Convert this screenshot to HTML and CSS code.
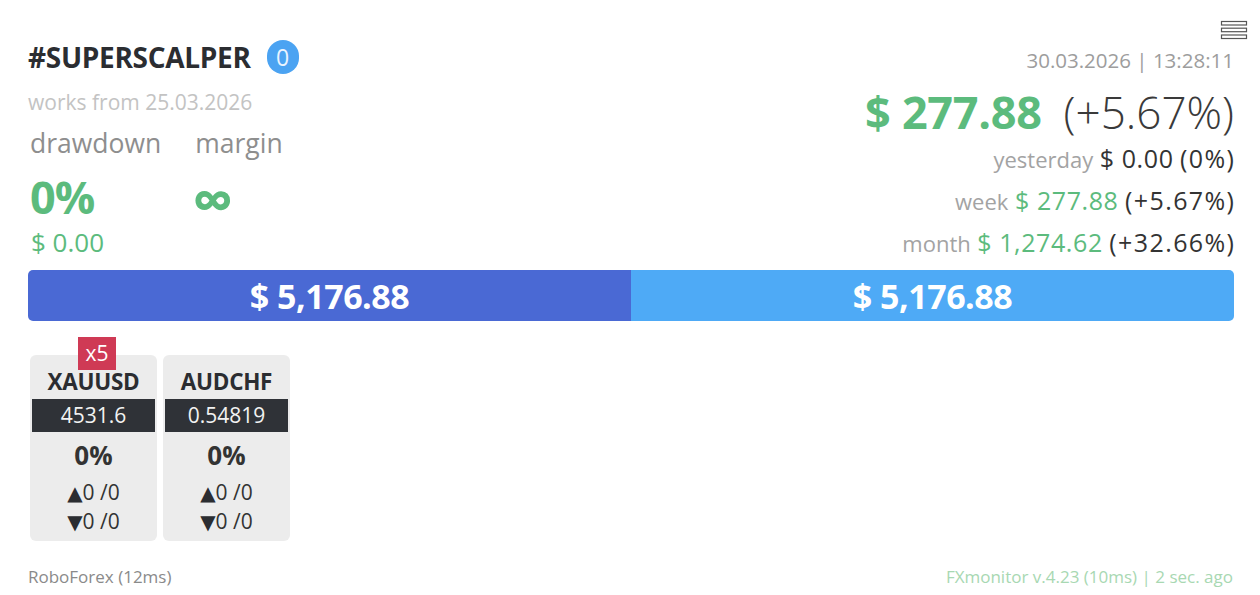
FILE: index.html
```html
<!DOCTYPE html>
<html lang="en">
<head>
<meta charset="utf-8">
<title>#SUPERSCALPER</title>
<link rel="stylesheet" href="styles.css">
</head>
<body>
<div class="page">
  <header class="top">
    <div class="left">
      <div class="title-row">
        <h1 class="title">#SUPERSCALPER</h1>
        <span class="count">0</span>
      </div>
      <div class="since">works from 25.03.2026</div>
      <div class="stats">
        <div class="stat">
          <div class="label">drawdown</div>
          <div class="big">0%</div>
          <div class="sub">$ 0.00</div>
        </div>
        <div class="stat">
          <div class="label">margin</div>
          <div class="big inf">∞</div>
        </div>
      </div>
    </div>
    <div class="right">
      <div class="menu" aria-label="menu">
        <svg width="28" height="20" viewBox="0 0 28 20">
          <rect x="1.5" y="1.5" width="25" height="3.5" fill="none" stroke="#555" stroke-width="1.2"/>
          <rect x="1.5" y="8.2" width="25" height="3.5" fill="none" stroke="#555" stroke-width="1.2"/>
          <rect x="1.5" y="15" width="25" height="3.5" fill="none" stroke="#555" stroke-width="1.2"/>
        </svg>
      </div>
      <div class="date">30.03.2026 | 13:28:11</div>
      <div class="profit"><span class="profit-val">$ 277.88</span><span class="profit-pct">(+5.67%)</span></div>
      <div class="period"><span class="plabel">yesterday</span> <span class="val dark">$ 0.00</span> <span class="val pc dark">(0%)</span></div>
      <div class="period"><span class="plabel">week</span> <span class="val green">$ 277.88</span> <span class="val pc dark">(+5.67%)</span></div>
      <div class="period"><span class="plabel">month</span> <span class="val green">$ 1,274.62</span> <span class="val pc dark">(+32.66%)</span></div>
    </div>
  </header>

  <div class="bar">
    <div class="bar-part balance">$ 5,176.88</div>
    <div class="bar-part equity">$ 5,176.88</div>
  </div>

  <div class="cards">
    <div class="card">
      <span class="mult">x5</span>
      <div class="sym">XAUUSD</div>
      <div class="price">4531.6</div>
      <div class="pct">0%</div>
      <div class="trades"><span class="tri">▲</span>0 /0</div>
      <div class="trades last"><span class="tri">▼</span>0 /0</div>
    </div>
    <div class="card">
      <div class="sym">AUDCHF</div>
      <div class="price">0.54819</div>
      <div class="pct">0%</div>
      <div class="trades"><span class="tri">▲</span>0 /0</div>
      <div class="trades last"><span class="tri">▼</span>0 /0</div>
    </div>
  </div>

  <footer class="foot">
    <span class="broker">RoboForex (12ms)</span>
    <span class="version">FXmonitor v.4.23 (10ms) | 2 sec. ago</span>
  </footer>
</div>
</body>
</html>
```

FILE: styles.css
```css
* { box-sizing: border-box; }

html, body {
  margin: 0;
  padding: 0;
  background: #ffffff;
}

body {
  font-family: "Open Sans", "Noto Sans", "Liberation Sans", sans-serif;
  color: #333;
}

.page {
  height: 595px;
  padding: 20px 26px 0 28px;
  display: flex;
  flex-direction: column;
}

.top {
  display: flex;
  justify-content: space-between;
  align-items: flex-start;
  height: 244px;
}

.left {
  padding-top: 20px;
}

.title-row {
  display: flex;
  align-items: center;
  height: 34px;
}

.title {
  margin: 0;
  font-size: 28px;
  font-weight: 700;
  line-height: 34px;
  color: #2b2d31;
  letter-spacing: -0.3px;
}

.count {
  margin-left: 16px;
  width: 32px;
  height: 34px;
  border-radius: 16px;
  background: #4ba3f2;
  color: #eaf4ff;
  font-size: 23px;
  line-height: 34px;
  text-align: center;
}

.since {
  margin-top: 14px;
  font-size: 21px;
  line-height: 28px;
  color: #c3c3c3;
}

.stats {
  display: flex;
  gap: 34px;
  margin-top: 10px;
  padding-left: 2px;
}

.stat {
  display: flex;
  flex-direction: column;
}

.label {
  font-size: 26.5px;
  line-height: 34px;
  color: #8e8e8e;
}

.big {
  margin-top: 12px;
  height: 50px;
  font-size: 45px;
  font-weight: 700;
  line-height: 50px;
  color: #5cbb7d;
  letter-spacing: -1px;
}

.inf {
  font-size: 58px;
  line-height: 54px;
  margin-left: -3px;
}

.sub {
  margin-top: 5px;
  margin-left: 1px;
  font-size: 26px;
  line-height: 30px;
  color: #5cbb7d;
}

.right {
  display: flex;
  flex-direction: column;
  align-items: flex-end;
}

.menu {
  height: 20px;
  margin-right: -14px;
  line-height: 0;
}

.date {
  margin-top: 6px;
  font-size: 20.5px;
  line-height: 28px;
  color: #9d9d9d;
}

.profit {
  margin-top: 13px;
  height: 50px;
  display: flex;
  align-items: baseline;
  white-space: nowrap;
}

.profit-val {
  font-size: 45px;
  font-weight: 700;
  line-height: 50px;
  color: #5cbb7d;
  letter-spacing: -0.3px;
}

.profit-pct {
  margin-left: 22px;
  font-size: 44px;
  font-weight: 300;
  line-height: 50px;
  color: #3a3a3a;
}

.period {
  height: 42px;
  font-size: 25px;
  line-height: 42px;
  white-space: nowrap;
}

.plabel {
  font-size: 22px;
  color: #a3a3a3;
}

.val {
  letter-spacing: 0.6px;
}

.val.pc {
  letter-spacing: 1.4px;
  margin-right: -1.4px;
}

.dark { color: #333; }
.green { color: #5cbb7d; }

.bar {
  margin-top: 6px;
  height: 51px;
  display: flex;
  border-radius: 5px;
  overflow: hidden;
}

.bar-part {
  flex: 1 1 0;
  display: flex;
  align-items: center;
  justify-content: center;
  color: #ffffff;
  font-size: 34px;
  font-weight: 700;
  letter-spacing: -0.5px;
}

.balance { background: #4a69d4; }
.equity { background: #4eaaf6; }

.cards {
  display: flex;
  gap: 6px;
  margin-top: 34px;
  padding-left: 2px;
}

.card {
  position: relative;
  width: 127px;
  padding: 10px 2px 5px;
  background: #ececec;
  border-radius: 6px;
  text-align: center;
}

.mult {
  position: absolute;
  left: 48px;
  top: -18px;
  width: 38px;
  height: 33px;
  background: #cf3a55;
  color: #ffffff;
  font-size: 21px;
  line-height: 33px;
  text-align: center;
}

.sym {
  position: relative;
  font-size: 22.5px;
  font-weight: 700;
  line-height: 34px;
  color: #2b2d31;
  letter-spacing: -0.3px;
}

.price {
  height: 33px;
  background: #2f3237;
  color: #f2f2f2;
  font-size: 21px;
  line-height: 33px;
}

.pct {
  font-size: 26px;
  font-weight: 700;
  line-height: 46px;
  color: #333;
}

.trades {
  height: 28px;
  font-size: 21px;
  line-height: 28px;
  color: #333;
}

.trades.last {
  height: 30px;
  line-height: 30px;
}

.tri {
  font-family: "DejaVu Sans", sans-serif;
  font-size: 20px;
  line-height: 1;
  color: #2b2d31;
}

.foot {
  margin-top: auto;
  display: flex;
  justify-content: space-between;
  align-items: center;
  height: 36px;
  padding-bottom: 2px;
  font-size: 17px;
}

.broker { color: #8a8a8a; }

.version {
  margin-right: 1px;
  color: #a8d8b2;
}
```
